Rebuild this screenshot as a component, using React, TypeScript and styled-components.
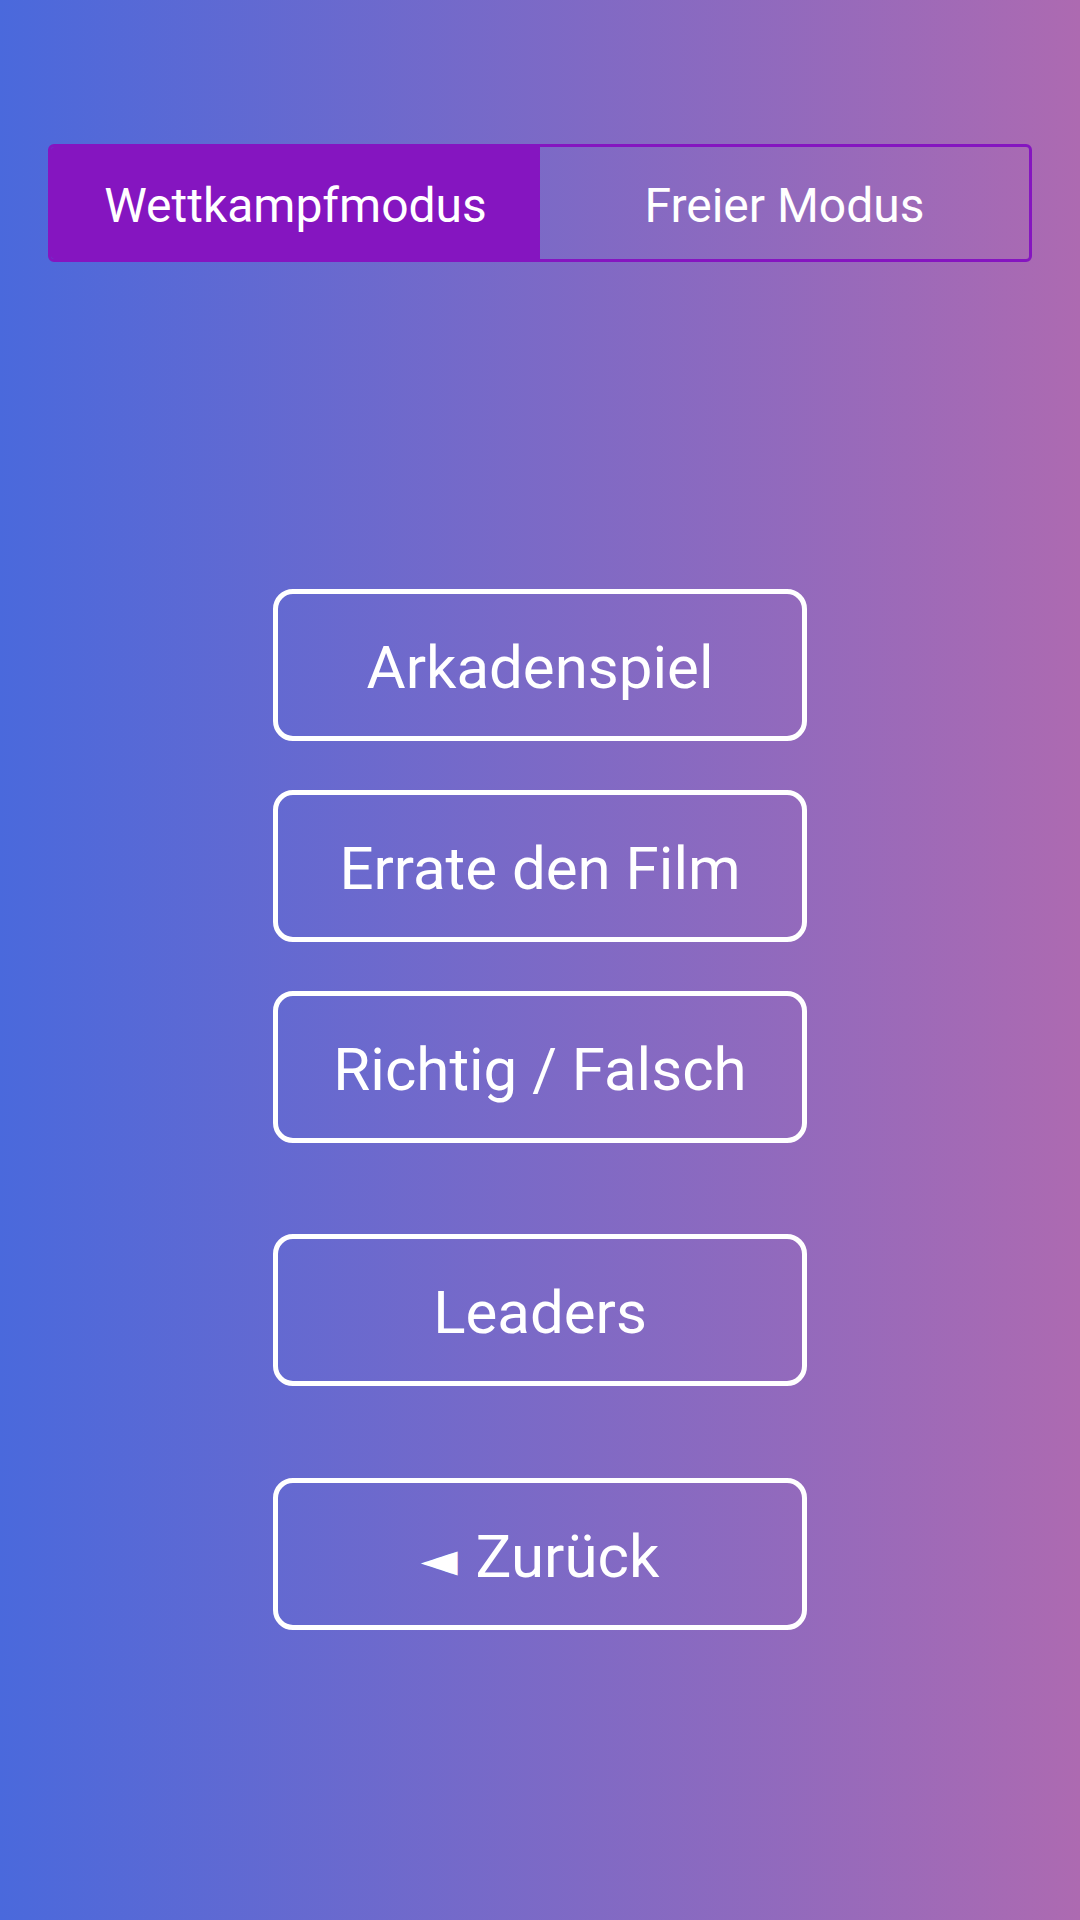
import { useState } from 'react';
import styled, { createGlobalStyle } from 'styled-components';

const GlobalStyle = createGlobalStyle`
  html, body {
    margin: 0;
    padding: 0;
  }
  body {
    font-family: Roboto, 'Liberation Sans', sans-serif;
    background: linear-gradient(to right, #4a69dc 0%, #ad6ab1 100%);
    min-height: 1920px;
  }
`;

const Page = styled.div`
  min-height: 1920px;
  display: flex;
  flex-direction: column;
  align-items: center;
  padding-top: 144px;
  box-sizing: border-box;
`;

const ModeSwitch = styled.div`
  width: 984px;
  height: 118px;
  box-sizing: border-box;
  border: 3px solid #8515c0;
  border-radius: 6px;
  display: grid;
  grid-template-columns: 1fr 1fr;
  overflow: hidden;
`;

const ModeTab = styled.button<{ $active: boolean }>`
  border: none;
  margin: 0;
  padding: 4px 0 0;
  background: ${(p) => (p.$active ? '#8515c0' : 'transparent')};
  color: #ffffff;
  font-family: Roboto, 'Liberation Sans', sans-serif;
  font-size: 48px;
  cursor: pointer;
  display: flex;
  align-items: center;
  justify-content: center;
`;

const Menu = styled.div`
  margin-top: 327px;
  display: flex;
  flex-direction: column;
  align-items: center;
`;

const MenuButton = styled.button<{ $gap: number }>`
  width: 534px;
  height: 152px;
  box-sizing: border-box;
  margin-top: ${(p) => p.$gap}px;
  padding: 5px 0 0;
  border: 5px solid #ffffff;
  border-radius: 20px;
  background: transparent;
  color: #ffffff;
  font-family: Roboto, 'Liberation Sans', sans-serif;
  font-size: 60px;
  cursor: pointer;
  display: flex;
  align-items: center;
  justify-content: center;
`;

const Arrow = styled.span`
  font-family: 'DejaVu Sans', sans-serif;
  font-size: 48px;
  margin-right: 18px;
  position: relative;
  top: 2px;
`;

const App: React.FC = () => {
  const [mode, setMode] = useState<'contest' | 'free'>('contest');

  return (
    <>
      <GlobalStyle />
      <Page>
        <ModeSwitch>
          <ModeTab $active={mode === 'contest'} onClick={() => setMode('contest')}>
            Wettkampfmodus
          </ModeTab>
          <ModeTab $active={mode === 'free'} onClick={() => setMode('free')}>
            Freier Modus
          </ModeTab>
        </ModeSwitch>
        <Menu>
          <MenuButton $gap={0}>Arkadenspiel</MenuButton>
          <MenuButton $gap={49}>Errate den Film</MenuButton>
          <MenuButton $gap={49}>Richtig / Falsch</MenuButton>
          <MenuButton $gap={91}>Leaders</MenuButton>
          <MenuButton $gap={92}>
            <Arrow>◄</Arrow>Zurück
          </MenuButton>
        </Menu>
      </Page>
    </>
  );
};

export default App;
